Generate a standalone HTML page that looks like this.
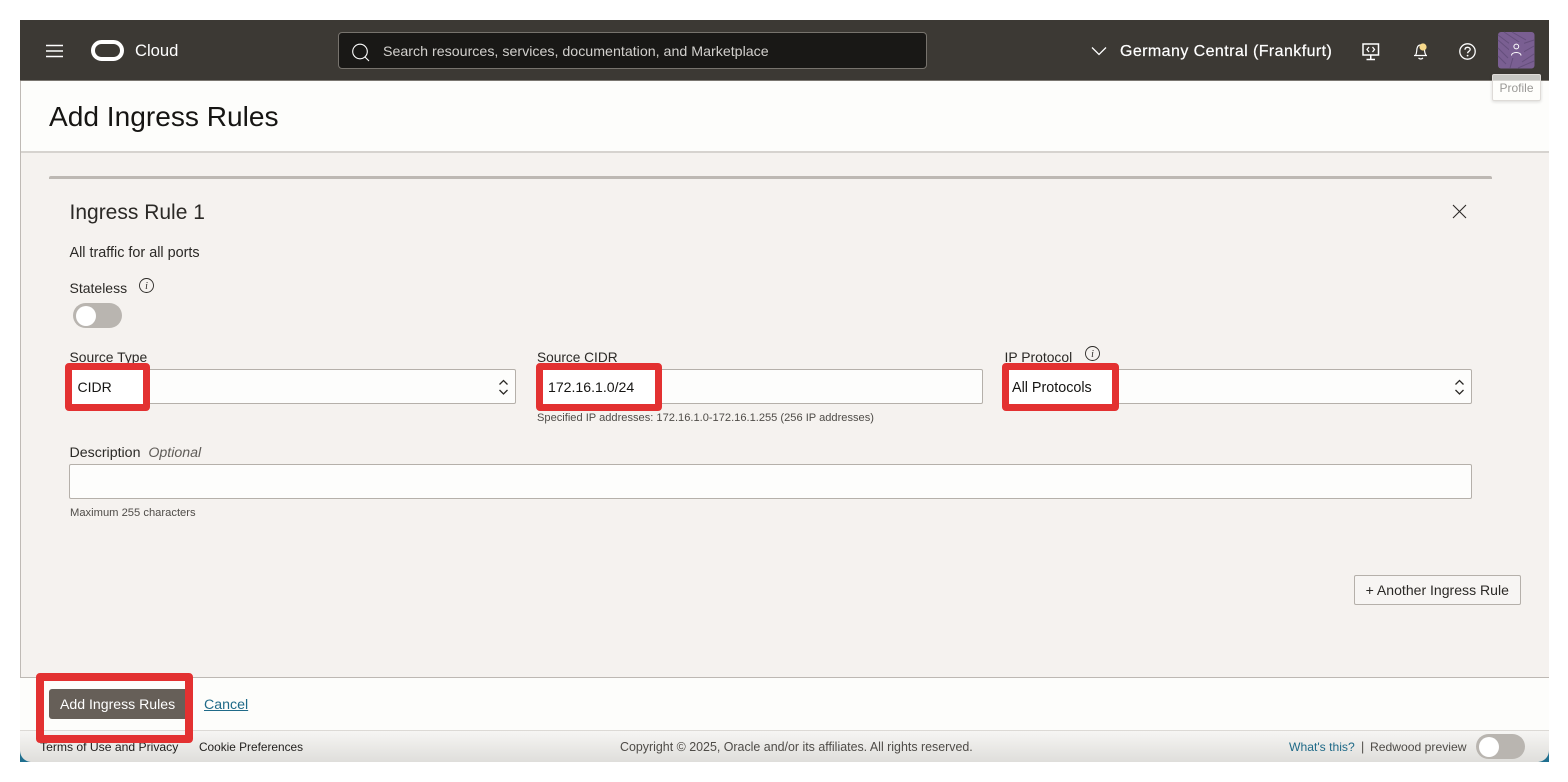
<!DOCTYPE html>
<html lang="en">
<head>
<meta charset="utf-8">
<title>Add Ingress Rules</title>
<style>
html,body{margin:0;padding:0;background:#fff;width:1568px;height:782px;overflow:hidden}
body{position:relative;font-family:"Liberation Sans",sans-serif;color:#161513}
.a{position:absolute;white-space:nowrap}
.t{font-size:13.9px;line-height:16px;color:#2b2926}
.inp{position:absolute;box-sizing:border-box;background:#fdfdfc;border:1px solid #b5b0aa;border-radius:2px;height:35px;top:369px}
.red{position:absolute;box-sizing:border-box;border:7.5px solid #e33131;border-radius:4px;background:#fff}
svg{position:absolute;overflow:visible}
</style>
</head>
<body>
<div class="a" style="left:20px;top:20px;width:1529px;height:742px;background:#f5f2ef"></div>

<!-- header -->
<div class="a" style="left:20px;top:20px;width:1529px;height:60px;background:#3c3934;border-bottom:1px solid #7a7670;box-sizing:content-box"></div>
<svg style="left:46px;top:44px" width="18" height="14"><path d="M0 1.5H17M0 7H17M0 12.5H17" stroke="#fff" stroke-width="1.5" fill="none"/></svg>
<div class="a" style="left:91px;top:39.5px;width:33px;height:21px;box-sizing:border-box;border:4px solid #fff;border-radius:10.5px"></div>
<div class="a" style="left:135px;top:41px;font-size:16.6px;line-height:20px;color:#fff">Cloud</div>
<div class="a" style="left:338px;top:32px;width:589px;height:37px;box-sizing:border-box;background:#191816;border:1px solid #77736d;border-radius:4px"></div>
<svg style="left:351px;top:43px" width="20" height="20"><circle cx="9" cy="8.5" r="7.3" stroke="#fff" stroke-width="1.1" fill="none"/><path d="M14 14L18 18" stroke="#fff" stroke-width="1.1"/></svg>
<div class="a" style="left:383px;top:43px;font-size:14.22px;line-height:18px;color:#d2d0cd">Search resources, services, documentation, and Marketplace</div>
<svg style="left:1091px;top:46px" width="16" height="11"><path d="M1 1.5L8 8.5L15 1.5" stroke="#fff" stroke-width="1.3" fill="none"/></svg>
<div class="a" style="left:1120px;top:42px;font-size:16px;line-height:20px;color:#fff;font-weight:400;letter-spacing:.42px;-webkit-text-stroke:.2px #fff">Germany Central (Frankfurt)</div>
<svg style="left:1362px;top:43px" width="18" height="18"><rect x="1" y="1" width="15.5" height="11" stroke="#fff" stroke-width="1.5" fill="none"/><path d="M7 4L5 6.5L7 9M10.5 4L12.5 6.5L10.5 9" stroke="#fff" stroke-width="1.3" fill="none"/><path d="M8.75 12V16M4.5 16.5H13" stroke="#fff" stroke-width="1.5"/></svg>
<svg style="left:1412px;top:42px" width="18" height="18"><path d="M2 13.5H15M3.5 13.5C5 11 4.5 9 5 6.5C5.5 4 7 3 8.5 3C10 3 12 4 12.3 6.5C12.6 9 12.5 11 14 13.5M6.5 16C8 17.3 9.5 17.3 11 16" stroke="#fff" stroke-width="1.2" fill="none"/><circle cx="11" cy="5" r="3.6" fill="#f7d98a"/></svg>
<svg style="left:1459px;top:43px" width="18" height="18"><circle cx="8.5" cy="8.5" r="7.7" stroke="#fff" stroke-width="1.3" fill="none"/><path d="M6 6.8C6 5 7.3 4.3 8.6 4.3C10 4.3 11.2 5.2 11.2 6.5C11.2 8.3 8.6 8.3 8.6 10.2" stroke="#fff" stroke-width="1.3" fill="none"/><circle cx="8.6" cy="12.6" r=".9" fill="#fff"/></svg>
<svg style="left:1498px;top:32px" width="37" height="37"><rect width="36.5" height="36.5" rx="3" fill="#7a5f92"/><path d="M0 8L16 22L12 36M0 16L10 26M0 24L8 32M6 0L24 12L36 8M14 0L28 8M22 22L36 14M24 30L36 22M20 36L36 29M0 3L20 18" stroke="#654f7c" stroke-width="1" fill="none"/><rect x="11" y="10" width="15" height="16" fill="#7a5f92"/><circle cx="18.3" cy="14.5" r="2.4" stroke="#fff" stroke-width="1" fill="none"/><path d="M13.5 23.5C13.5 19.5 23 19.5 23 23.5" stroke="#fff" stroke-width="1" fill="none"/></svg>

<!-- title band -->
<div class="a" style="left:20px;top:81px;width:1529px;height:70px;background:#fdfdfb;border-bottom:2px solid #d6d3cf"></div>
<div class="a" style="left:20px;top:81px;width:1px;height:649px;background:#bfbab5"></div>
<div class="a" style="left:49px;top:100px;font-size:28.1px;line-height:33px;color:#161513">Add Ingress Rules</div>

<!-- tooltip -->
<div class="a" style="left:1492px;top:74px;width:49px;height:27px;box-sizing:border-box;background:rgba(253,253,251,.72);border:1px solid #dedbd7;border-radius:2px;box-shadow:0 1px 3px rgba(0,0,0,.14);font-size:12px;line-height:26px;text-align:center;color:#9a9996">Profile</div>

<!-- card -->
<div class="a" style="left:49px;top:176px;width:1443px;height:3px;background:#bdb8b3;border-radius:2px 2px 0 0"></div>
<div class="a" style="left:69.5px;top:200px;font-size:21px;line-height:25px;color:#2b2926">Ingress Rule 1</div>
<svg style="left:1452px;top:204px" width="15" height="15"><path d="M1 1L14 14M14 1L1 14" stroke="#2b2926" stroke-width="1.1"/></svg>
<div class="a t" style="left:69.5px;top:245px;font-size:14.4px">All traffic for all ports</div>
<div class="a t" style="left:69.5px;top:280px;font-size:14px">Stateless</div>
<svg style="left:139px;top:278px" width="16" height="16"><circle cx="7.5" cy="7.5" r="7" stroke="#2b2926" stroke-width=".9" fill="none"/><text x="7.5" y="11" font-family="Liberation Serif,serif" font-style="italic" font-size="10" text-anchor="middle" fill="#2b2926">i</text></svg>
<div class="a" style="left:73px;top:303px;width:49px;height:25px;background:#b9b5b0;border-radius:13px"></div>
<div class="a" style="left:75.5px;top:305.5px;width:20px;height:20px;background:#fff;border-radius:50%"></div>

<div class="a t" style="left:69.5px;top:349px">Source Type</div>
<div class="a t" style="left:537px;top:350px;font-size:13.7px">Source CIDR</div>
<div class="a t" style="left:1004.5px;top:349px;font-size:13.9px">IP Protocol</div>
<svg style="left:1085px;top:346px" width="16" height="16"><circle cx="7.5" cy="7.5" r="7" stroke="#2b2926" stroke-width=".9" fill="none"/><text x="7.5" y="11" font-family="Liberation Serif,serif" font-style="italic" font-size="10" text-anchor="middle" fill="#2b2926">i</text></svg>

<div class="inp" style="left:69px;width:447px"></div>
<div class="inp" style="left:536px;width:447px"></div>
<div class="inp" style="left:1004px;width:468px"></div>
<svg style="left:498px;top:379px" width="11" height="17"><path d="M1.5 5.5L5.5 1.5L9.5 5.5M1.5 11L5.5 15L9.5 11" stroke="#2b2926" stroke-width="1.3" fill="none"/></svg>
<svg style="left:1454px;top:379px" width="11" height="17"><path d="M1.5 5.5L5.5 1.5L9.5 5.5M1.5 11L5.5 15L9.5 11" stroke="#2b2926" stroke-width="1.3" fill="none"/></svg>

<div class="a" style="left:537px;top:412px;font-size:11.1px;line-height:13px;color:#4f4c48">Specified IP addresses: 172.16.1.0-172.16.1.255 (256 IP addresses)</div>

<div class="a t" style="left:69.5px;top:445px;font-size:14.2px">Description&nbsp; <i style="color:#5f5c58">Optional</i></div>
<div class="inp" style="left:69px;top:464px;width:1403px"></div>
<div class="a" style="left:70px;top:507px;font-size:11.2px;line-height:13px;color:#4f4c48">Maximum 255 characters</div>

<div class="a" style="left:1354px;top:575px;width:166.5px;height:30px;box-sizing:border-box;background:#f7f5f3;border:1px solid #b5b0aa;border-radius:2px;font-size:14.05px;line-height:29px;text-align:center;color:#2b2926">+ Another Ingress Rule</div>

<!-- action bar -->
<div class="a" style="left:20px;top:677px;width:1529px;height:53px;box-sizing:border-box;background:#fdfdfb;border-top:1px solid #bdb8b3"></div>

<!-- footer -->
<div class="a" style="left:20px;top:730px;width:1529px;height:32px;box-sizing:border-box;border-top:1px solid #dcd9d5;background:linear-gradient(#f6f5f3,#dfdedb);overflow:hidden">
</div>
<svg style="left:20px;top:750px" width="12" height="12"><path d="M0 0V12H12C5 12 0 7 0 0Z" fill="#1f6f8f"/></svg>
<svg style="left:1537px;top:750px" width="12" height="12"><path d="M12 0V12H0C7 12 12 7 12 0Z" fill="#1f6f8f"/></svg>
<div class="a" style="left:40px;top:740px;font-size:12.15px;line-height:15px;color:#201e1c">Terms of Use and Privacy</div>
<div class="a" style="left:199px;top:740px;font-size:11.85px;line-height:15px;color:#201e1c">Cookie Preferences</div>
<div class="a" style="left:620px;top:740px;font-size:12.43px;line-height:15px;color:#4f4c48">Copyright © 2025, Oracle and/or its affiliates. All rights reserved.</div>
<div class="a" style="left:1289px;top:740px;font-size:12.15px;line-height:15px;color:#1f6a88">What's this?</div>
<div class="a" style="left:1361px;top:740px;font-size:12.5px;line-height:15px;color:#4f4c48">|</div>
<div class="a" style="left:1370px;top:740px;font-size:12.15px;line-height:15px;color:#4f4c48">Redwood preview</div>
<div class="a" style="left:1476px;top:734px;width:49px;height:25px;background:#b9b5b0;border-radius:13px"></div>
<div class="a" style="left:1478.5px;top:736.5px;width:20px;height:20px;background:#fff;border-radius:50%"></div>

<!-- red highlight boxes -->
<div class="red" style="left:64.5px;top:362.5px;width:85px;height:48.5px"></div>
<div class="a" style="left:77.5px;top:379px;font-size:14px;line-height:17px;color:#161513">CIDR</div>
<div class="red" style="left:535.5px;top:362.5px;width:126px;height:48.5px"></div>
<div class="a" style="left:548px;top:379px;font-size:14.1px;line-height:17px;color:#161513">172.16.1.0/24</div>
<div class="red" style="left:1002px;top:362.5px;width:117px;height:48.5px"></div>
<div class="a" style="left:1012px;top:380px;font-size:14.35px;line-height:17px;color:#161513">All Protocols</div>

<div class="a" style="left:49px;top:689px;width:139px;height:30px;background:#665f58;border-radius:3px"></div>
<div class="a" style="left:60px;top:696px;font-size:14.1px;line-height:17px;color:#fff">Add Ingress Rules</div>
<div class="a" style="left:36px;top:673px;width:157px;height:70px;box-sizing:border-box;border-style:solid;border-color:#e33131;border-width:8px 8px 8.5px 8px;border-radius:4px"></div>
<div class="a" style="left:204px;top:697px;font-size:14.2px;line-height:17px;color:#1f6a88;text-decoration:underline">Cancel</div>
</body>
</html>
